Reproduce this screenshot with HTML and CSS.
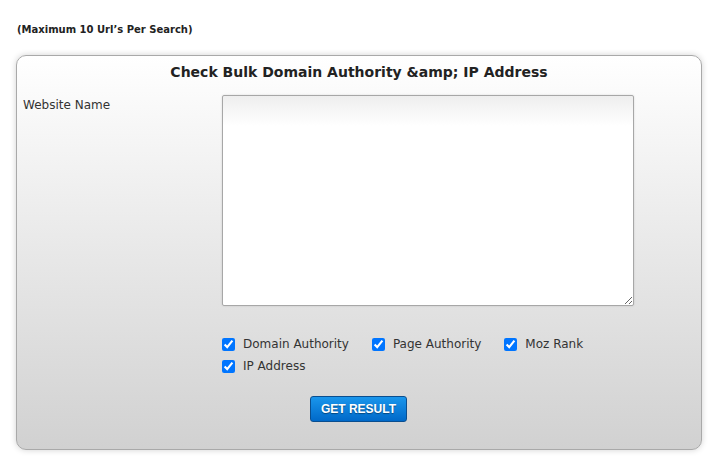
FILE: index.html
```html
<!DOCTYPE html>
<html lang="en">
<head>
  <meta charset="UTF-8" />
  <title>Bulk Domain Authority Checker</title>
  <link rel="stylesheet" href="styles.css">
</head>
<body>

  <div class="note">(Maximum 10 Url’s Per Search)</div>

  <form class="checker">
    <h2 class="checker-title">Check Bulk Domain Authority &amp;amp; IP Address</h2>

    <div class="row">
      <label class="row-label" for="urls">Website Name</label>
      <div class="row-field">
        <textarea id="urls" class="urls"></textarea>

        <div class="options">
          <label class="option"><input type="checkbox" checked> Domain Authority</label>
          <label class="option"><input type="checkbox" checked> Page Authority</label>
          <label class="option"><input type="checkbox" checked> Moz Rank</label>
          <label class="option"><input type="checkbox" checked> IP Address</label>
        </div>
      </div>
    </div>

    <div class="actions">
      <button type="button" class="btn-result">GET RESULT</button>
    </div>
  </form>

</body>
</html>
```

FILE: styles.css
```css
body {
  margin: 0;
  padding: 24px 16px;
  background: #ffffff;
  font-family: "DejaVu Sans", Verdana, sans-serif;
  color: #333333;
}

.note {
  font-size: 10px;
  font-weight: bold;
  color: #222;
  padding-left: 1px;
  margin-bottom: 20px;
}

.checker {
  width: 686px;
  box-sizing: border-box;
  border: 1px solid #a9a9a9;
  border-radius: 10px;
  background: linear-gradient(to bottom, #ffffff 0%, #d1d1d1 100%);
  box-shadow: 0 0 6px rgba(0,0,0,0.18);
  padding: 8px 0 27px;
}

.checker-title {
  margin: 0 0 15px;
  text-align: center;
  font-size: 14px;
  font-weight: bold;
  color: #222;
}

.row {
  display: flex;
}

.row-label {
  width: 199px;
  padding-left: 6px;
  font-size: 12px;
  line-height: 16px;
  margin-top: 2px;
}

.urls {
  display: block;
  width: 412px;
  height: 211px;
  box-sizing: border-box;
  margin: 0;
  border: 1px solid #a7a7a7;
  border-radius: 2px;
  background: linear-gradient(to bottom, #eeeeee 0px, #ffffff 30px);
  box-shadow: 0 0 2px rgba(0,0,0,0.15);
  resize: both;
}

.options {
  display: flex;
  flex-wrap: wrap;
  width: 400px;
  margin-top: 30px;
  row-gap: 6px;
}

.option {
  display: flex;
  align-items: center;
  font-size: 12px;
  line-height: 16px;
  margin-right: 23px;
}

.option input {
  margin: 0 8px 0 0;
  width: 13px;
  height: 13px;
  accent-color: #0075ff;
}

.actions {
  text-align: center;
  margin-top: 22px;
  padding-right: 1px;
}

.btn-result {
  width: 97px;
  height: 26px;
  border: 1px solid #0a4e8f;
  border-radius: 3px;
  background: linear-gradient(to bottom, #1a96ec 0%, #0069c9 100%);
  color: #ffffff;
  font-family: "Liberation Sans", Arial, sans-serif;
  font-size: 12px;
  font-weight: bold;
  text-shadow: 0 1px 1px rgba(0,0,0,0.4);
  cursor: pointer;
}
```
